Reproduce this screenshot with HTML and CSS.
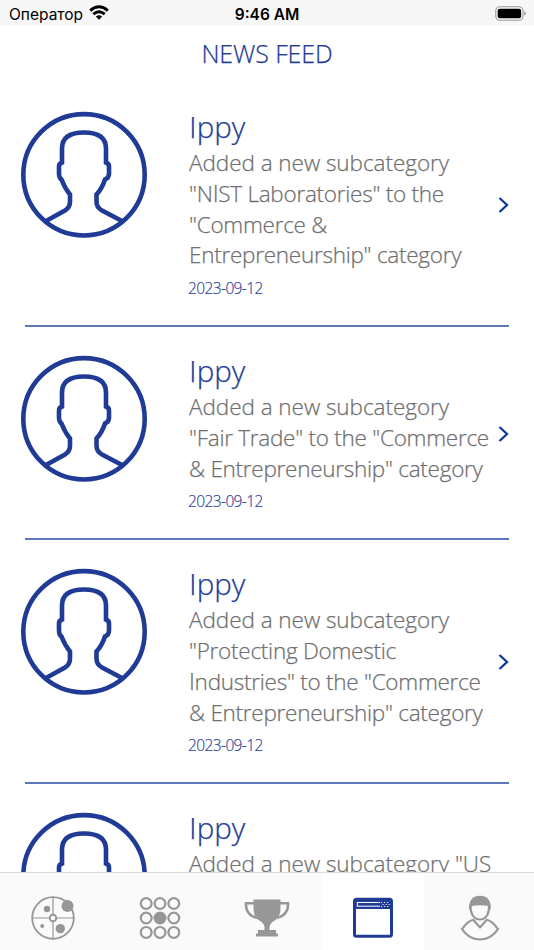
FILE: index.html
```html
<!DOCTYPE html>
<html lang="en">
<head>
    <meta charset="UTF-8">
    <meta name="viewport" content="width=device-width, initial-scale=1.0">
    <title>News Feed</title>
    <link rel="stylesheet" href="styles.css">
</head>
<body>
    <!-- shared icons -->
    <svg class="sprite" width="0" height="0">
        <symbol id="avatar" viewBox="0 0 126 126">
            <g fill="none" stroke="#1f3b96" stroke-width="4.6">
                <circle cx="63" cy="63.3" r="60.7"/>
                <path d="M25 109.5L44 99Q49 96 49 90V83Q44 77 40.500 68Q38 66.500 38 62V55Q38 52 41 51V37C41 26 49 21 63 21S85 26 85 37V51Q88 52 88 55V62Q88 66.500 84 68Q81 77 75.500 83V90Q75.500 96 81 99L101 109.500"/>
            </g>
        </symbol>
        <symbol id="chevron" viewBox="0 0 12 18">
            <path d="M1.500 2L9 9L1.500 16" fill="none" stroke="#0b3a9e" stroke-width="2.300"/>
        </symbol>
    </svg>

    <div class="screen">
        <div class="status-bar">
            <div class="carrier">
                <span>Оператор</span>
                <svg class="wifi" width="20" height="16" viewBox="0 0 20 16">
                    <g fill="none" stroke="#000" stroke-width="2.900">
                        <path d="M1.200 5.600Q10 -1.900 18.800 5.600"/>
                        <path d="M4.300 9.200Q10 4.400 15.700 9.200"/>
                    </g>
                    <path d="M6.800 11.500Q10 9 13.200 11.500L10 14.800Z"/>
                </svg>
            </div>
            <div class="clock">9:46 AM</div>
            <div class="power">
                <svg width="32" height="15" viewBox="0 0 32 15">
                    <rect x=".8" y=".8" width="27.200" height="13.400" rx="4" fill="none" stroke="#999" stroke-width="1.100"/>
                    <rect x="2.700" y="2.700" width="23.400" height="9.600" rx="2"/>
                    <path d="M29.300 5.200Q31 6 31 7.500T29.300 9.800Z" fill="#999"/>
                </svg>
            </div>
        </div>

        <h1 class="title">NEWS FEED</h1>

        <div class="feed">
            <div class="item">
                <svg class="avatar"><use href="#avatar"/></svg>
                <div class="content">
                    <div class="name"><span class="cap">I</span>ppy</div>
                    <div class="text">Added a new subcategory<br>"N<span class="cap">I</span>ST Laboratories" to the<br>"Commerce &amp;<br>Entrepreneurship" category</div>
                    <div class="date">2023-09-12</div>
                </div>
                <svg class="chevron"><use href="#chevron"/></svg>
            </div>
            <div class="item">
                <svg class="avatar"><use href="#avatar"/></svg>
                <div class="content">
                    <div class="name"><span class="cap">I</span>ppy</div>
                    <div class="text">Added a new subcategory<br>"Fair Trade" to the "Commerce<br>&amp; Entrepreneurship" category</div>
                    <div class="date">2023-09-12</div>
                </div>
                <svg class="chevron"><use href="#chevron"/></svg>
            </div>
            <div class="item">
                <svg class="avatar"><use href="#avatar"/></svg>
                <div class="content">
                    <div class="name"><span class="cap">I</span>ppy</div>
                    <div class="text">Added a new subcategory<br>"Protecting Domestic<br><span class="cap">I</span>ndustries" to the "Commerce<br>&amp; Entrepreneurship" category</div>
                    <div class="date">2023-09-12</div>
                </div>
                <svg class="chevron"><use href="#chevron"/></svg>
            </div>
            <div class="item">
                <svg class="avatar"><use href="#avatar"/></svg>
                <div class="content">
                    <div class="name"><span class="cap">I</span>ppy</div>
                    <div class="text">Added a new subcategory "US</div>
                </div>
            </div>
        </div>

        <div class="tab-bar">
            <div class="tab">
                <svg width="44" height="46" viewBox="0 0 44 46">
                    <g fill="none" stroke="#979797">
                        <path d="M22 2V44M1 23H43" stroke-width="1.200"/>
                        <circle cx="22" cy="23" r="20.800" stroke-width="1.800"/>
                        <circle cx="22" cy="23" r="3.300" fill="#fafafa" stroke-width="2"/>
                    </g>
                    <g fill="#979797">
                        <circle cx="36.500" cy="11" r="6"/>
                        <circle cx="16" cy="14" r="3.200"/>
                        <circle cx="29.300" cy="33.600" r="4.700"/>
                        <circle cx="11.200" cy="31" r="2"/>
                    </g>
                </svg>
            </div>
            <div class="tab">
                <svg width="44" height="46" viewBox="0 0 44 46">
                    <g fill="none" stroke="#979797" stroke-width="2.200">
                        <circle cx="8.200" cy="8.500" r="5.400"/>
                        <circle cx="22" cy="8.500" r="5.400"/>
                        <circle cx="35.800" cy="8.500" r="5.400"/>
                        <circle cx="8.200" cy="23" r="5.400"/>
                        <circle cx="22" cy="23" r="5.400" fill="#979797"/>
                        <circle cx="35.800" cy="23" r="5.400"/>
                        <circle cx="8.200" cy="37.400" r="5.400"/>
                        <circle cx="22" cy="37.400" r="5.400"/>
                        <circle cx="35.800" cy="37.400" r="5.400"/>
                    </g>
                </svg>
            </div>
            <div class="tab">
                <svg width="46" height="46" viewBox="0 0 46 46">
                    <path d="M9.500 4.500H36.500V14Q36.500 21 31.500 25Q26 28 25.500 32V35H32V38.500H34V41.500H12V38.500H14V35H20.500V32Q20 28 14.500 25Q9.500 21 9.500 14Z" fill="#979797"/>
                    <path d="M10 8.300H2C1.500 15 5 22 14.500 23M36 8.300H44C44.500 15 41 22 31.500 23" fill="none" stroke="#979797" stroke-width="2.600"/>
                </svg>
            </div>
            <div class="tab active">
                <svg width="44" height="46" viewBox="0 0 44 46">
                    <rect x="3.500" y="4.300" width="37" height="37" rx="2" fill="none" stroke="#1f3b96" stroke-width="3"/>
                    <path d="M4 4.500H41V14H4Z" fill="#1f3b96"/>
                    <path d="M6 7.500H29M6 11.200H29M6.300 7V11.500" stroke="#fff" stroke-width="1"/>
                    <path d="M30 7.500H39M31.500 9.500H39M30 11.500H39" stroke="#fff" stroke-width=".9" stroke-dasharray="1.200 1.800"/>
                </svg>
            </div>
            <div class="tab">
                <svg width="44" height="46" viewBox="0 0 44 46">
                    <g fill="none" stroke="#979797" stroke-width="2.100" stroke-linejoin="round">
                        <path d="M12.500 10C12 18 15.500 24.500 22 24.500S31.500 18 31 10"/>
                        <path d="M16 24.500Q9.500 26 4 34.200Q11 44.500 22 44.500T40 34.200Q34.500 26 28 24.500M15.500 25L22 32.500L28.500 25"/>
                    </g>
                    <path d="M11.200 15C10.500 6 14 .8 22 .8S33.500 6 32.800 15L30.500 11Q22 9.500 13.500 11Z" fill="#979797"/>
                </svg>
            </div>
        </div>
    </div>
</body>
</html>
```
FILE: styles.css
```css
body {
    margin: 0;
    background: #fff;
    font-family: "Open Sans", "Noto Sans", sans-serif;
}
.sprite {
    display: block;
}
.screen {
    width: 534px;
    height: 950px;
    display: flex;
    flex-direction: column;
    overflow: hidden;
}
.status-bar {
    flex: none;
    display: flex;
    align-items: center;
    height: 26px;
    padding: 0 7px 0 8px;
    background: #f7f7f7;
    color: #000;
    font-family: Inter, sans-serif;
    font-size: 15.5px;
    box-sizing: border-box;
}
.carrier {
    flex: 1;
    display: flex;
    align-items: center;
    gap: 6px;
    padding: 2px 0 0 1px;
}
.wifi {
    margin-top: -3px;
}
.clock {
    padding: 2px 2px 0 0;
    font-weight: 600;
}
.power {
    flex: 1;
    display: flex;
    justify-content: flex-end;
}
.title {
    flex: none;
    height: 57px;
    margin: 0;
    color: #1f3b96;
    font-size: 25px;
    font-weight: 300;
    line-height: 54px;
    letter-spacing: -.1px;
    text-align: center;
    -webkit-text-stroke: .25px #1f3b96;
}
.feed {
    flex: 1;
    min-height: 0;
    overflow: hidden;
    padding: 0 25px;
}
.item {
    display: flex;
    padding: 27px 0 25px;
    border-bottom: 2px solid #5d78b9;
}
.avatar {
    flex: none;
    width: 126px;
    height: 127px;
    margin: .5px 42px 0 -4px;
}
.content {
    flex: 1;
    white-space: nowrap;
}
.name {
    color: #1f3b96;
    font-size: 29.5px;
    font-weight: 300;
    line-height: 33px;
    -webkit-text-stroke: .25px #1f3b96;
}
/* plain capital I without the crossbars */
.cap {
    font-family: Lato, sans-serif;
    line-height: 1;
}
.text {
    padding-top: 5px;
    color: #6f6f6f;
    font-size: 22.5px;
    font-weight: 300;
    line-height: 30.75px;
    letter-spacing: -.26px;
    -webkit-text-stroke: .25px #6f6f6f;
}
.text::first-line {
    letter-spacing: -.04px;
}
.date {
    margin-top: 6px;
    margin-left: -1px;
    color: #1f3b96;
    font-size: 15.5px;
    font-weight: 300;
    line-height: 23px;
    letter-spacing: -.6px;
    -webkit-text-stroke: .15px #1f3b96;
}
.chevron {
    flex: none;
    align-self: center;
    width: 12px;
    height: 18px;
    margin-right: -1px;
}
.tab-bar {
    flex: none;
    display: flex;
    height: 78px;
    box-sizing: border-box;
    border-top: 1px solid #dcdcdc;
    background: #fafafa;
}
.tab {
    flex: none;
    width: 106.7px;
    display: flex;
    justify-content: center;
    padding-top: 22px;
    box-sizing: border-box;
}
.tab.active {
    width: 102px;
    margin: 0 2.5px 0 2px;
    background: #fff;
}
```
